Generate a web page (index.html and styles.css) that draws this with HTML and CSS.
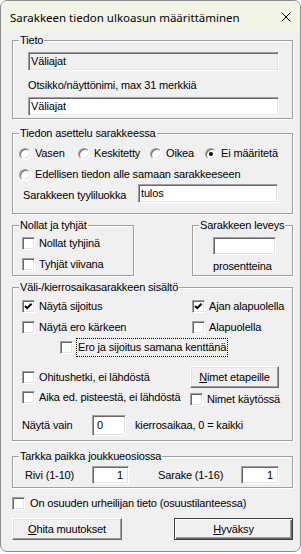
FILE: index.html
```html
<!DOCTYPE html>
<html lang="fi">
<head>
<meta charset="utf-8">
<title>Sarakkeen tiedon ulkoasun määrittäminen</title>
<link rel="stylesheet" href="styles.css">
</head>
<body>
<div class="window">
  <div class="titlebar">
    <span class="title">Sarakkeen tiedon ulkoasun määrittäminen</span>
    <svg class="close" width="10" height="10" viewBox="0 0 10 10"><path d="M0.5 0.5 L9.5 9.5 M9.5 0.5 L0.5 9.5" stroke="#000" stroke-width="1" fill="none"/></svg>
  </div>
  <div class="content">
    <fieldset class="grp">
      <legend>Tieto</legend>
      <div class="g1-in">
        <div class="field disabled">Väliajat</div>
        <div class="l1">Otsikko/näyttönimi, max 31 merkkiä</div>
        <div class="field f2">Väliajat</div>
      </div>
    </fieldset>

    <fieldset class="grp g2">
      <legend>Tiedon asettelu sarakkeessa</legend>
      <div class="g2-in">
        <div class="radios">
          <div class="opt"><span class="rb"></span><span>Vasen</span></div>
          <div class="opt"><span class="rb"></span><span>Keskitetty</span></div>
          <div class="opt"><span class="rb"></span><span>Oikea</span></div>
          <div class="opt"><span class="rb on"></span><span>Ei määritetä</span></div>
        </div>
        <div class="opt row-gap"><span class="rb"></span><span>Edellisen tiedon alle samaan sarakkeeseen</span></div>
        <div class="styl">
          <span class="styl-lbl">Sarakkeen tyyliluokka</span>
          <div class="field styl-in">tulos</div>
        </div>
      </div>
    </fieldset>

    <div class="pair">
      <fieldset class="grp g3">
        <legend>Nollat ja tyhjät</legend>
        <div class="g3-in">
          <div class="chk"><span class="cb"></span><span>Nollat tyhjinä</span></div>
          <div class="chk row-gap"><span class="cb"></span><span>Tyhjät viivana</span></div>
        </div>
      </fieldset>
      <fieldset class="grp g4">
        <legend>Sarakkeen leveys</legend>
        <div class="g4-in">
          <div class="field w-in"></div>
          <div class="pros">prosentteina</div>
        </div>
      </fieldset>
    </div>

    <fieldset class="grp g5">
      <legend>Väli-/kierrosaikasarakkeen sisältö</legend>
      <div class="g5-in">
        <div class="r">
          <div class="chk left170"><span class="cb on"><svg width="11" height="11" viewBox="0 0 11 11"><path d="M2 5 L4.2 7.2 L8.6 2.8" stroke="#000" stroke-width="2" fill="none"/></svg></span><span>Näytä sijoitus</span></div>
          <div class="chk"><span class="cb on"><svg width="11" height="11" viewBox="0 0 11 11"><path d="M2 5 L4.2 7.2 L8.6 2.8" stroke="#000" stroke-width="2" fill="none"/></svg></span><span>Ajan alapuolella</span></div>
        </div>
        <div class="r row-gap">
          <div class="chk left170"><span class="cb"></span><span>Näytä ero kärkeen</span></div>
          <div class="chk"><span class="cb"></span><span>Alapuolella</span></div>
        </div>
        <div class="r r3">
          <div class="chk"><span class="cb"></span><span class="focus">Ero ja sijoitus samana kenttänä</span></div>
        </div>
        <div class="r r4">
          <div class="chk left168"><span class="cb"></span><span>Ohitushetki, ei lähdöstä</span></div>
          <div class="btn b-nimet"><span><u>N</u>imet etapeille</span></div>
        </div>
        <div class="r r5">
          <div class="chk left168"><span class="cb"></span><span>Aika ed. pisteestä, ei lähdöstä</span></div>
          <div class="chk nk"><span class="cb"></span><span>Nimet käytössä</span></div>
        </div>
        <div class="r r6">
          <span class="nv-lbl">Näytä vain</span>
          <div class="field nv-in">0</div>
          <span class="nv-txt">kierrosaikaa, 0 = kaikki</span>
        </div>
      </div>
    </fieldset>

    <fieldset class="grp g6">
      <legend>Tarkka paikka joukkueosiossa</legend>
      <div class="g6-in">
        <span class="rivi-lbl">Rivi (1-10)</span>
        <div class="field num rivi-in">1</div>
        <span class="sar-lbl">Sarake (1-16)</span>
        <div class="field num sar-in">1</div>
      </div>
    </fieldset>

    <div class="chk osuus"><span class="cb"></span><span>On osuuden urheilijan tieto (osuustilanteessa)</span></div>

    <div class="buttons">
      <div class="btn b-ohita"><span><u>O</u>hita muutokset</span></div>
      <div class="btn b-ok default"><span><u>H</u>yväksy</span></div>
    </div>
  </div>
</div>
</body>
</html>
```

FILE: styles.css
```css
* { box-sizing: border-box; }

body {
  margin: 0;
  background: #fff;
  font-family: "Liberation Sans", Arial, sans-serif;
  font-size: 11px;
  letter-spacing: -0.15px;
  line-height: 13px;
  color: #000;
}

.window {
  width: 301px;
  height: 552px;
  border: 1px solid #8c8c8c;
  border-radius: 7px;
  background: #f0f0f0;
  overflow: hidden;
}

.titlebar {
  height: 30px;
  background: #f2f5e6;
  display: flex;
  align-items: center;
  justify-content: space-between;
  padding: 2px 9px 0 9px;
}

.title {
  font-family: "Noto Sans", "Liberation Sans", sans-serif;
  font-size: 11.5px;
  letter-spacing: 0;
}

.close { display: block; }

.content {
  display: flex;
  flex-direction: column;
  padding: 3px 7px 0 11px;
}

.grp {
  margin: 0;
  padding: 0;
  min-width: 0;
  border: 1px solid #a0a0a0;
  box-shadow: 1px 1px 0 #fff, inset 1px 1px 0 #fff;
}

.grp legend {
  margin-left: 6px;
  padding: 0 1px;
  line-height: 13px;
  background: #f0f0f0;
}

/* sunken text field */
.field {
  height: 19px;
  border: 1px solid;
  border-color: #a0a0a0 #fff #fff #a0a0a0;
  box-shadow: inset 1px 1px 0 #696969, inset -1px -1px 0 #e3e3e3;
  background: #fff;
  padding: 0 0 0 2px;
  line-height: 17px;
  white-space: nowrap;
}
.field.disabled { background: #f0f0f0; }
.field.num { text-align: right; padding: 0 5px 0 0; }

/* group 1 */
.g1-in { padding: 5px 13px 2px 15px; }
.l1 { margin-top: 8px; }
.f2 { margin-top: 5px; }

/* group 2 */
.g2 { margin-top: 8px; }
.g2-in { padding: 7px 0 10px 6px; }
.radios {
  display: grid;
  grid-template-columns: 59px 72px 55px auto;
}
.opt {
  display: flex;
  align-items: center;
  gap: 4px;
  height: 13px;
  white-space: nowrap;
}
.row-gap { margin-top: 8px; }

.rb {
  flex: none;
  width: 12px;
  height: 12px;
  border-radius: 50%;
  border: 1px solid;
  border-color: #a0a0a0 #fff #fff #a0a0a0;
  box-shadow: inset 1px 1px 0 #696969, inset -1px -1px 0 #e3e3e3;
  background: #fff;
  display: flex;
  align-items: center;
  justify-content: center;
}
.rb.on::after {
  content: "";
  width: 4px;
  height: 4px;
  border-radius: 50%;
  background: #000;
}

.styl {
  display: flex;
  align-items: center;
  margin-top: 3px;
  padding-left: 4px;
}
.styl-lbl { width: 115px; padding-top: 3px; }
.styl-in { width: 140px; }

/* groups 3 and 4 */
.pair {
  display: flex;
  justify-content: space-between;
  margin-top: 5px;
}
.g3 { width: 122px; }
.g4 { width: 101px; }
.g3-in { padding: 5px 0 4px 9px; }
.g4-in { padding: 5px 0 2px 20px; }
.w-in { width: 63px; height: 18px; }
.pros { margin-top: 5px; }

.chk {
  display: flex;
  align-items: center;
  gap: 4px;
  height: 13px;
  white-space: nowrap;
}
.cb {
  flex: none;
  width: 13px;
  height: 13px;
  border: 1px solid;
  border-color: #a0a0a0 #fff #fff #a0a0a0;
  box-shadow: inset 1px 1px 0 #696969, inset -1px -1px 0 #e3e3e3;
  background: #fff;
  display: flex;
  align-items: center;
  justify-content: center;
}
.cb svg { display: block; }

/* group 5 */
.g5 { margin-top: 5px; }
.g5-in { padding: 6px 0 4px 9px; }
.r { display: flex; align-items: center; }
.left170 { width: 170px; }
.left168 { width: 168px; }
.r3 { margin-top: 4px; padding-left: 38px; height: 19px; }
.r3 .chk { height: 19px; gap: 3px; }
.focus {
  border: 1px dotted #000;
  padding: 2px 1px;
  line-height: 13px;
}
.r4 { margin-top: 9px; height: 22px; }
.r5 { margin-top: 3px; height: 13px; align-items: flex-start; }
.nk { margin-top: 2px; }
.r6 { margin-top: 11px; height: 21px; }
.nv-lbl { width: 70px; }
.nv-in { width: 34px; height: 21px; line-height: 19px; padding-left: 4px; }
.nv-txt { margin-left: 9px; }

/* buttons */
.btn {
  height: 22px;
  border: 1px solid;
  border-color: #fff #696969 #696969 #fff;
  box-shadow: inset -1px -1px 0 #a0a0a0, inset 1px 1px 0 #e3e3e3;
  background: #f0f0f0;
  display: flex;
  align-items: center;
  justify-content: center;
  white-space: nowrap;
}
.btn.default {
  border: 1px solid #3c3c3c;
  box-shadow: inset 1px 1px 0 #fff, inset -1px -1px 0 #696969, inset -2px -2px 0 #a0a0a0;
}
.b-nimet { width: 89px; }

/* group 6 */
.g6 { margin-top: 9px; }
.g6-in {
  display: flex;
  align-items: center;
  padding: 3px 0 3px 12px;
}
.rivi-lbl { width: 67px; }
.rivi-in { width: 37px; height: 18px; line-height: 16px; }
.sar-lbl { width: 83px; margin-left: 29px; }
.sar-in { width: 38px; height: 18px; line-height: 16px; }

.osuus { margin-top: 9px; gap: 5px; }

.buttons {
  display: flex;
  justify-content: space-between;
  margin-top: 8px;
}
.b-ohita { width: 110px; }
.b-ok { width: 119px; }
```
